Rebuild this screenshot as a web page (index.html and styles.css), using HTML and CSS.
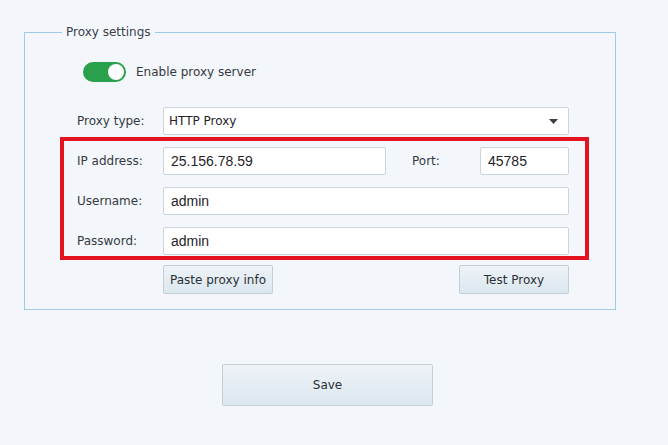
FILE: index.html
```html
<!DOCTYPE html>
<html lang="en">
<head>
    <meta charset="UTF-8">
    <meta name="viewport" content="width=device-width, initial-scale=1.0">
    <link rel="stylesheet" href="styles.css">
</head>
<body>

    <fieldset class="settings">
        <legend>Proxy settings</legend>

        <!-- Interruptor -->
        <div class="toggle-row">
            <span class="toggle"><span class="knob"></span></span>
            <span class="label">Enable proxy server</span>
        </div>

        <!-- Tipo de proxy -->
        <div class="row type-row">
            <span class="label">Proxy type:</span>
            <div class="select">
                <span>HTTP Proxy</span>
                <svg width="9" height="5" viewBox="0 0 9 5"><path d="M0 0 L9 0 L4.5 5 Z" fill="#3c3f44"/></svg>
            </div>
        </div>

        <!-- Datos del proxy -->
        <div class="highlight">
            <div class="row ip-row">
                <span class="label">IP address:</span>
                <input class="input-field" type="text" value="25.156.78.59">
                <span class="label port-label">Port:</span>
                <input class="input-field" type="text" value="45785">
            </div>
            <div class="row">
                <span class="label">Username:</span>
                <input class="input-field" type="text" value="admin">
            </div>
            <div class="row">
                <span class="label">Password:</span>
                <input class="input-field" type="text" value="admin">
            </div>
        </div>

        <div class="actions">
            <button class="btn">Paste proxy info</button>
            <button class="btn">Test Proxy</button>
        </div>
    </fieldset>

    <button class="btn save-btn">Save</button>

</body>
</html>
```

FILE: styles.css
```css
body {
    margin: 0;
    padding: 0;
    background-color: #f3f6fb;
    font-family: "DejaVu Sans", sans-serif;
    font-size: 12px;
    color: #353a42;
}

.settings {
    width: 592px;
    margin: 24px 0 0 24px;
    padding: 0 0 15px 0;
    border: 1px solid #9fcbe6;
    box-sizing: border-box;
    height: 286px;
}

.settings legend {
    margin-left: 37px;
    padding: 0 4px;
    line-height: 16px;
    color: #3b4049;
}

.toggle-row {
    display: flex;
    align-items: center;
    gap: 10px;
    margin: 22px 0 0 58px;
}

.toggle {
    position: relative;
    width: 43px;
    height: 20px;
    border-radius: 10px;
    background-color: #28a04c;
}

.knob {
    position: absolute;
    right: 2px;
    top: 2px;
    width: 16px;
    height: 16px;
    border-radius: 50%;
    background-color: white;
}

.row {
    display: grid;
    grid-template-columns: 86px 406px;
    align-items: center;
}

.type-row {
    margin: 25px 0 0 52px;
}

.select {
    display: flex;
    justify-content: space-between;
    align-items: center;
    height: 28px;
    padding: 0 10px 0 5px;
    background-color: white;
    border: 1px solid #cdd5dc;
    border-radius: 2px;
    box-sizing: border-box;
    color: #1f2328;
}

.highlight {
    margin: 2px 26px 0 35px;
    padding: 6px 0 1px 13px;
    border: 4px solid #e3141f;
    display: flex;
    flex-direction: column;
    gap: 12px;
}

.ip-row {
    grid-template-columns: 86px 223px 26px 68px 89px;
}

.port-label {
    grid-column: 4;
}

.input-field {
    height: 28px;
    padding: 0 7px;
    border: 1px solid #cdd5dc;
    border-radius: 2px;
    box-sizing: border-box;
    background-color: white;
    font-family: "Liberation Sans", Arial, sans-serif;
    font-size: 14px;
    color: #1f2328;
    width: 100%;
}

.actions {
    display: flex;
    justify-content: space-between;
    margin: 5px 46px 0 138px;
}

.btn {
    width: 110px;
    height: 29px;
    padding: 0;
    border: 1px solid #c5ced6;
    border-radius: 2px;
    background: linear-gradient(#eef3f7, #dbe7ef);
    font-family: "DejaVu Sans", sans-serif;
    font-size: 12px;
    color: #2b2f35;
    cursor: pointer;
}

.save-btn {
    display: block;
    width: 211px;
    height: 42px;
    margin: 54px 0 0 222px;
}
```
